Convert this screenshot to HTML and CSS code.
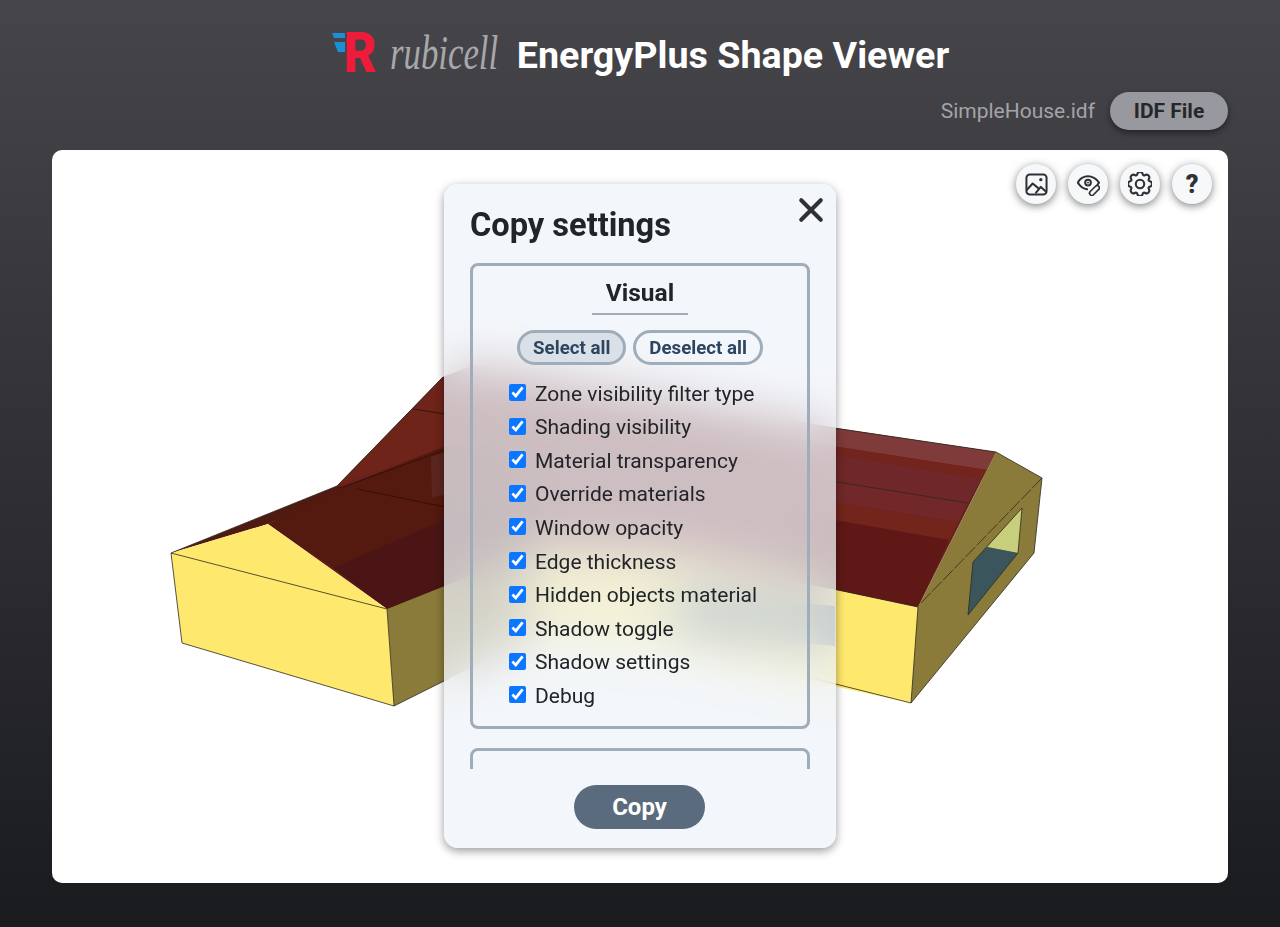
FILE: index.html
```html
<!DOCTYPE html>
<html lang="en">
<head>
<meta charset="utf-8">
<title>EnergyPlus Shape Viewer</title>
<link rel="stylesheet" href="styles.css">
</head>
<body>
<div class="page">
  <header class="brand-row">
    <svg class="logo" viewBox="0 0 166 46" role="img" aria-label="rubicell">
      <polygon class="logo-blue" points="1,0 14,0 14,5 3,5"/>
      <polygon class="logo-blue" points="3,9 14,9 14,19 7,19"/>
      <text class="logo-r" x="13" y="39" textLength="33" lengthAdjust="spacingAndGlyphs">R</text>
      <text class="logo-word" transform="translate(59 36) scale(.87 1.2)">rubicell</text>
    </svg>
    <h1 class="title">EnergyPlus Shape Viewer</h1>
  </header>
  <div class="file-row">
    <span class="file-name">SimpleHouse.idf</span>
    <button class="file-btn">IDF File</button>
  </div>
  <main class="viewer">
    <svg class="scene" viewBox="52 150 1176 733" aria-hidden="true">
      <!-- hidden part of the building, seen only through the blurred panel -->
      <polygon fill="#8a7b3a" points="387,609 394,706 450,678 530,640 530,548 443,580"/>
      <polygon fill="#ffe86e" points="530,548 670,552 920,607 911,703 660,648 530,640"/>
      <polygon fill="#3a565c" points="665,590 835,606 835,646 685,632"/>
      <!-- roof -->
      <polygon fill="#6e2419" points="337,486 443,377 475,365 500,420 443,447"/>
      <polygon fill="#6a2020" points="443,377 475,365 836,428 996,452 918,607 790,580 660,552 530,548 387,609 268,524 337,486"/>
      <polygon fill="#54190f" points="268,524 343,487 443,447 520,440 520,520 443,520 333,568"/>
      <polygon fill="#4a1514" points="333,568 443,520 540,500 540,548 387,609"/>
      <polygon fill="#4f1a10" points="171,553 337,486 343,487 268,524"/>
      <polygon fill="#6e2419" points="337,486 443,377 443,447"/>
      <polygon fill="#5c2620" points="431,457 445,452 445,495 432,497"/>
      <path class="edge-thin" d="M413,409 L445,414 M357,489 L445,507 M340,488 L445,450"/>
      <!-- right roof bands -->
      <polygon fill="#7f3a3a" points="800,423 996,452 987,470 800,441"/>
      <polygon fill="#73241c" points="800,441 987,470 982,479 800,449"/>
      <polygon fill="#6f2729" points="800,449 982,479 968,503 800,476"/>
      <polygon fill="#722729" points="800,476 968,503 958,522 800,497"/>
      <polygon fill="#73251c" points="800,497 958,522 949,540 800,514"/>
      <polygon fill="#5f1816" points="800,514 949,540 918,607 800,582"/>
      <path class="edge" d="M800,476 L968,503"/>
      <!-- right gable end -->
      <polygon fill="#8a7b3a" points="996,452 1042,478 1034,553 911,703 918,607"/>
      <polygon fill="#c7cf7d" points="1022,508 1018,553 987,547"/>
      <polygon fill="#3a565c" points="987,547 1018,553 968,615 973,562"/>
      <path class="edge" d="M1022,508 L1018,553 L968,615 L973,562 Z"/>
      <path class="edge" d="M996,452 L1042,478 L1034,553 L911,703 L918,607"/>
      <path class="edge" stroke-dasharray="14 2" d="M921,603 L1042,478"/>
      <path class="edge" d="M800,423 L996,452 M800,582 L918,607 M800,675 L911,703"/>
      <!-- left gable end -->
      <polygon fill="#ffe86e" points="171,553 268,524 387,609 394,706 182,643"/>
      <path class="edge" d="M171,553 L182,643 L394,706 L387,609 Z"/>
      <path class="edge" d="M394,706 L450,678 M171,553 L337,486 M337,486 L443,377"/>
    </svg>

    <div class="tools">
      <button class="tool" aria-label="Screenshot">
        <svg class="tool-svg" viewBox="0 0 24 24"><rect x="1.5" y="1.5" width="21" height="21" rx="3.5"/><path d="M2 17.5 L8 11 L13.5 15.5 M11.5 20.5 L16.5 14.5 L22 19.5"/><circle class="tool-dot" cx="16.5" cy="7" r="1.7"/></svg>
      </button>
      <button class="tool" aria-label="Visibility">
        <svg class="tool-svg" viewBox="0 0 24 24"><path d="M10.5 17 C6 16.5 3 13.5 0.8 10 C3 6 6.5 3.5 11.5 3.5 C16.5 3.5 20 6 23 10 L21.5 12"/><circle cx="11.5" cy="10" r="3"/><circle class="tool-dot" cx="11.5" cy="10" r="1"/><path class="tool-thick" d="M15.5 21 L21 15.5"/><path class="tool-thick-in" d="M15.5 21 L21 15.5"/></svg>
      </button>
      <button class="tool" aria-label="Settings">
        <svg class="tool-svg tool-gear" viewBox="0 0 16 16"><circle cx="8" cy="8" r="2.8"/><path d="M9.796 1.343c-.527-1.79-3.065-1.79-3.592 0l-.094.319a.873.873 0 0 1-1.255.52l-.292-.16c-1.64-.892-3.433.902-2.54 2.541l.159.292a.873.873 0 0 1-.52 1.255l-.319.094c-1.79.527-1.79 3.065 0 3.592l.319.094a.873.873 0 0 1 .52 1.255l-.16.292c-.892 1.64.901 3.434 2.541 2.54l.292-.159a.873.873 0 0 1 1.255.52l.094.319c.527 1.79 3.065 1.79 3.592 0l.094-.319a.873.873 0 0 1 1.255-.52l.292.16c1.64.893 3.434-.902 2.54-2.541l-.159-.292a.873.873 0 0 1 .52-1.255l.319-.094c1.79-.527 1.79-3.065 0-3.592l-.319-.094a.873.873 0 0 1-.52-1.255l.16-.292c.893-1.64-.902-3.433-2.541-2.54l-.292.159a.873.873 0 0 1-1.255-.52l-.094-.319z"/></svg>
      </button>
      <button class="tool tool-help" aria-label="Help">?</button>
    </div>

    <section class="modal">
      <button class="close" aria-label="Close">
        <svg viewBox="0 0 24 24"><path d="M3 3 L21 21 M21 3 L3 21"/></svg>
      </button>
      <h2 class="modal-title">Copy settings</h2>
      <div class="modal-body">
        <div class="group">
          <h3 class="group-title">Visual</h3>
          <div class="group-actions">
            <button class="pill pill-on">Select all</button>
            <button class="pill">Deselect all</button>
          </div>
          <div class="check-list">
            <label class="check"><input type="checkbox" checked>Zone visibility filter type</label>
            <label class="check"><input type="checkbox" checked>Shading visibility</label>
            <label class="check"><input type="checkbox" checked>Material transparency</label>
            <label class="check"><input type="checkbox" checked>Override materials</label>
            <label class="check"><input type="checkbox" checked>Window opacity</label>
            <label class="check"><input type="checkbox" checked>Edge thickness</label>
            <label class="check"><input type="checkbox" checked>Hidden objects material</label>
            <label class="check"><input type="checkbox" checked>Shadow toggle</label>
            <label class="check"><input type="checkbox" checked>Shadow settings</label>
            <label class="check"><input type="checkbox" checked>Debug</label>
          </div>
        </div>
        <div class="group">
          <h3 class="group-title">Scene</h3>
        </div>
      </div>
      <div class="modal-foot">
        <button class="copy-btn">Copy</button>
      </div>
    </section>
  </main>
</div>
</body>
</html>
```

FILE: styles.css
```css
* { box-sizing: border-box; }
html, body { margin: 0; height: 100%; }
body {
  font-family: Roboto, "Liberation Sans", sans-serif;
  color: #212529;
  background: linear-gradient(180deg, #46454a 0%, #1a1b1f 100%);
}
button { font-family: inherit; cursor: pointer; }

.page {
  height: 927px;
  display: flex;
  flex-direction: column;
  padding: 0 52px 44px;
}

.brand-row {
  margin-top: 30px;
  height: 52px;
  display: flex;
  justify-content: center;
  align-items: center;
  gap: 20px;
}
.logo { width: 166px; height: 46px; overflow: visible; flex: none; }
.logo-blue { fill: #1d8fd6; }
.logo-r {
  font-family: Roboto, sans-serif;
  font-weight: 900;
  font-size: 55px;
  fill: #ee1c3a;
}
.logo-word {
  font-family: "Liberation Serif", serif;
  font-style: italic;
  font-size: 40px;
  fill: #a6a8ab;
}
.title {
  margin: 0;
  padding-bottom: 2px;
  font-size: 37.65px;
  font-weight: 700;
  color: #fff;
  line-height: 50px;
  white-space: nowrap;
}

.file-row {
  margin-top: 10px;
  height: 38px;
  display: flex;
  justify-content: flex-end;
  align-items: center;
  gap: 15px;
}
.file-name { font-size: 21px; color: #a3a4a8; }
.file-btn {
  width: 118px;
  height: 38px;
  border: 0;
  border-radius: 19px;
  background: #97999e;
  color: #25272b;
  font-size: 21px;
  font-weight: 700;
  box-shadow: 0 3px 6px rgba(0, 0, 0, .45);
}

.viewer {
  position: relative;
  margin-top: 20px;
  flex: 1;
  background: #fff;
  border-radius: 10px;
  overflow: hidden;
}
.scene {
  position: absolute;
  inset: 0;
  width: 100%;
  height: 100%;
}
.edge { fill: none; stroke: #2c2a20; stroke-width: 1; stroke-opacity: .8; }
.edge-thin { fill: none; stroke: #2e0c08; stroke-width: 1; stroke-opacity: .8; }

.tools {
  position: absolute;
  top: 14px;
  right: 16px;
  display: flex;
  gap: 12px;
}
.tool {
  width: 40px;
  height: 40px;
  padding: 0;
  border: 0;
  border-radius: 50%;
  background: #f6f8fa;
  color: #2f3136;
  display: flex;
  align-items: center;
  justify-content: center;
  box-shadow: 0 2px 8px rgba(0, 0, 0, .5);
}
.tool-svg {
  width: 23px;
  height: 23px;
  fill: none;
  stroke: currentColor;
  stroke-width: 2.1;
  stroke-linecap: round;
  stroke-linejoin: round;
}
.tool-gear { stroke-width: 1.4; width: 24px; height: 24px; }
.tool-dot { fill: currentColor; stroke: none; }
.tool-thick { stroke-width: 6.5; }
.tool-thick-in { stroke: #f6f8fa; stroke-width: 3; }
.tool-help { font-size: 25px; font-weight: 900; line-height: 1; }

.modal {
  position: absolute;
  left: 392px;
  top: 34px;
  width: 392px;
  height: 664px;
  display: flex;
  flex-direction: column;
  border-radius: 14px;
  background: rgba(239, 243, 248, .75);
  backdrop-filter: blur(24px);
  box-shadow: 0 3px 10px rgba(0, 0, 0, .4);
}
.close {
  position: absolute;
  top: 13px;
  right: 12px;
  width: 26px;
  height: 26px;
  padding: 0;
  border: 0;
  background: none;
}
.close svg {
  display: block;
  fill: none;
  stroke: #2f3136;
  stroke-width: 3.8;
  stroke-linecap: round;
}
.modal-title {
  margin: 21px 26px 18px;
  font-size: 32.6px;
  line-height: 40px;
  font-weight: 700;
}
.modal-body {
  height: 506px;
  margin: 0 26px;
  overflow: hidden;
  flex: none;
}
.group {
  border: 3px solid #9fadbb;
  border-radius: 8px;
  padding: 12px 0 14px;
  margin-bottom: 19px;
  text-align: center;
}
.group-title {
  display: inline-block;
  width: 96px;
  margin: 0;
  padding-bottom: 5px;
  border-bottom: 2px solid #9fadbb;
  font-size: 24.5px;
  line-height: 30px;
  font-weight: 700;
}
.group-actions {
  margin-top: 15px;
  display: flex;
  justify-content: center;
  gap: 7px;
}
.pill {
  height: 35px;
  padding: 0 13px;
  border: 3px solid #9fadbb;
  border-radius: 18px;
  background: transparent;
  color: #2c4560;
  font-size: 18.7px;
  font-weight: 700;
  white-space: nowrap;
}
.pill-on { background: #d9e0e7; }
.check-list {
  margin-top: 12px;
  padding-left: 36px;
  text-align: left;
}
.check {
  height: 33.55px;
  display: flex;
  align-items: center;
  gap: 9px;
  font-size: 21px;
}
.check input {
  width: 17px;
  height: 17px;
  margin: -2px 0 0;
  accent-color: #0b76ff;
  flex: none;
}
.modal-foot {
  padding: 16px 1px 0 0;
  display: flex;
  justify-content: center;
}
.copy-btn {
  width: 131px;
  height: 44px;
  border: 0;
  border-radius: 22px;
  background: #5a6b7e;
  color: #fff;
  font-size: 24px;
  font-weight: 700;
}
```
